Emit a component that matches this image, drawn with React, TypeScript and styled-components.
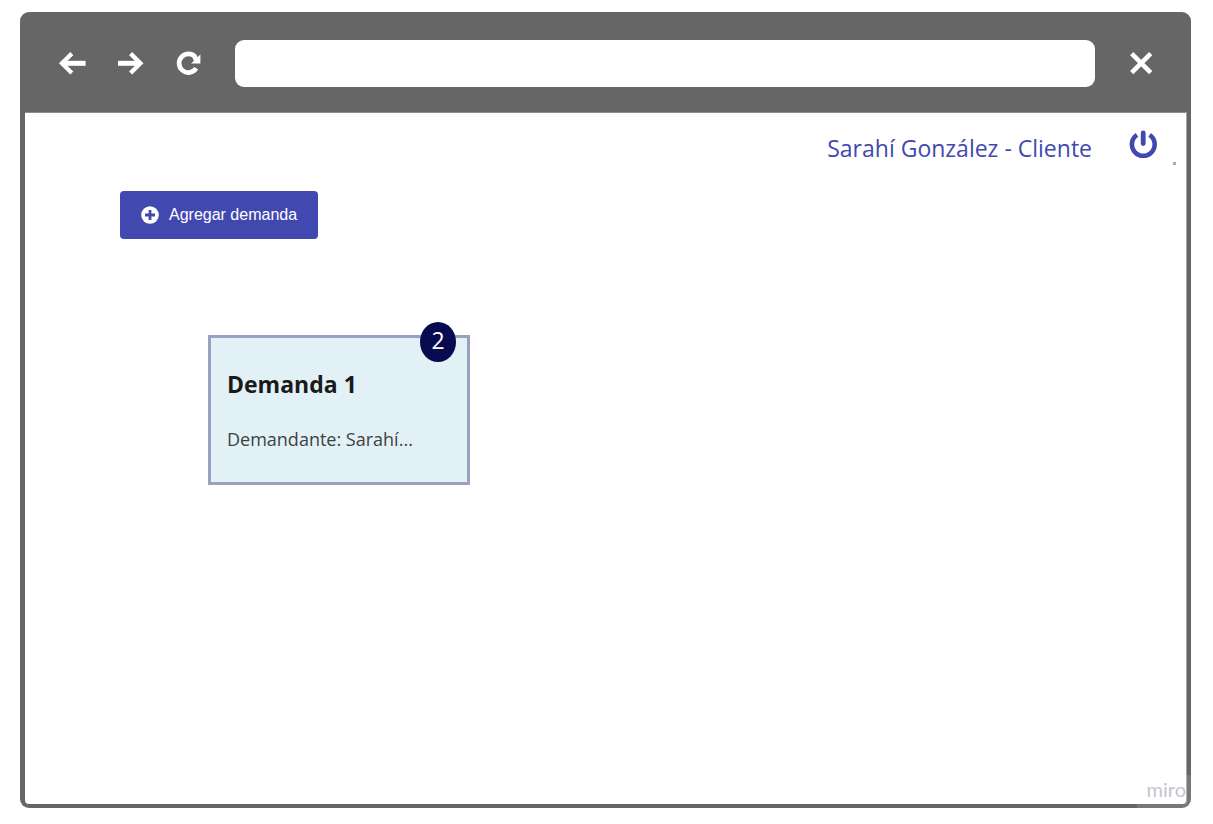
import React from "react";
import styled, { createGlobalStyle } from "styled-components";

const GlobalStyle = createGlobalStyle`
  *, *::before, *::after { box-sizing: border-box; }
  body {
    margin: 0;
    background: #fff;
    font-family: "Open Sans", "Noto Sans", sans-serif;
  }
  button { font: inherit; border: 0; padding: 0; cursor: pointer; }
  h2, p { margin: 0; }
  svg { display: block; }
`;

const Page = styled.div`
  min-height: 100vh;
  padding: 12px 22px 16px 20px;
  display: flex;
`;

const BrowserWindow = styled.div`
  position: relative;
  flex: 1;
  display: flex;
  flex-direction: column;
  background: #666;
  border-radius: 9px;
  padding: 0 4px 4px 5px;
`;

const Toolbar = styled.header`
  height: 100px;
  display: flex;
  align-items: center;
  gap: 31px;
  padding: 2px 32px 0 33px;
`;

const ToolButton = styled.button`
  display: flex;
  width: 28px;
  height: 24px;
  background: none;
  color: #fff;
`;

const AddressField = styled.input`
  flex: 1;
  min-width: 0;
  height: 47px;
  margin-right: 1px;
  border: 0;
  border-radius: 9px;
  background: #fff;
  padding: 0 16px;
  font: inherit;
  font-size: 18px;
`;

const Viewport = styled.main`
  flex: 1;
  background: #fff;
  border-top: 1px solid #8e8e8e;
  border-right: 1px solid #a8a8a8;
  border-radius: 0 0 4px 4px;
`;

const AccountBar = styled.div`
  display: flex;
  justify-content: flex-end;
  padding: 16px 10px 0 0;
  color: #4149b0;
`;

const AccountName = styled.span`
  font-size: 23px;
  line-height: 38px;
  margin-right: 36px;
`;

const PowerButton = styled.button`
  display: flex;
  width: 30px;
  height: 30px;
  background: none;
  color: #4149b0;
`;

const Dot = styled.span`
  width: 3px;
  height: 3px;
  margin: 33px 0 0 15px;
  background: #a3a6c4;
`;

const Content = styled.div`
  padding: 24px 95px;
`;

const AddButton = styled.button`
  display: flex;
  align-items: center;
  gap: 10px;
  height: 48px;
  padding: 0 21px;
  border-radius: 4px;
  background: #4149b0;
  color: #fff;
  font-family: "Liberation Sans", Arial, sans-serif;
  font-size: 16px;
  line-height: 24px;
`;

const Card = styled.article`
  position: relative;
  width: 262px;
  height: 150px;
  margin: 96px 0 0 88px;
  padding: 30px 16px;
  border: 3px solid #9aa1c0;
  background: #e2f1f5;
  color: #1a1a1a;
`;

const CardTitle = styled.h2`
  font-size: 23px;
  line-height: 32px;
  font-weight: 700;
`;

const CardText = styled.p`
  margin-top: 27px;
  color: #3c4144;
  font-size: 18px;
  line-height: 24px;
`;

const Badge = styled.span`
  position: absolute;
  top: -16px;
  right: 11px;
  width: 36px;
  height: 40px;
  border-radius: 50%;
  background: #080b50;
  color: #fff;
  font-size: 23px;
  line-height: 37px;
  text-align: center;
`;

const Watermark = styled.span`
  position: absolute;
  right: 0;
  bottom: 0;
  width: 54px;
  height: 33px;
  padding-right: 5px;
  border-bottom-right-radius: 9px;
  background: rgba(255, 255, 255, 0.12);
  color: #c4c4ce;
  font-family: Lato, sans-serif;
  font-size: 20px;
  line-height: 28px;
  text-align: right;
`;

const BackIcon = () => (
  <svg width="28" height="24" viewBox="0 0 28 24" fill="none" stroke="currentColor" aria-hidden="true">
    <path d="M13.8 2.6 4 12.3l9.8 9.7" strokeWidth="4.3" />
    <path d="M5.5 12.3H27.6" strokeWidth="5" />
  </svg>
);

const ForwardIcon = () => (
  <svg width="28" height="24" viewBox="0 0 28 24" fill="none" stroke="currentColor" aria-hidden="true">
    <path d="M13.6 2.6 23.4 12.3l-9.8 9.7" strokeWidth="4.3" />
    <path d="M1 12.3h21" strokeWidth="5" />
  </svg>
);

const ReloadIcon = () => (
  <svg width="28" height="24" viewBox="0 0 28 24" fill="none" aria-hidden="true">
    <path d="M19.4 6.1A9.3 9.3 0 1 0 20.2 17.3" stroke="currentColor" strokeWidth="4.7" />
    <path d="M24.4 3.4v9.2h-9.3l3.1-3.1-1.6-1.6 3.4-3.4 1.6 1.6z" fill="currentColor" />
  </svg>
);

const CloseIcon = () => (
  <svg width="28" height="24" viewBox="0 0 28 24" fill="none" stroke="currentColor" strokeWidth="4.6" aria-hidden="true">
    <path d="M4.7 2.7l19 19M23.7 2.7l-19 19" />
  </svg>
);

const PowerIcon = () => (
  <svg width="30" height="30" viewBox="0 0 30 30" fill="none" stroke="currentColor" aria-hidden="true">
    <path d="M9 5.9A11.4 11.4 0 1 0 21.6 5.9" strokeWidth="4.6" />
    <path d="M15.2 4v10.6" strokeWidth="4.8" strokeLinecap="round" />
  </svg>
);

const AddIcon = () => (
  <svg width="18" height="18" viewBox="0 0 18 18" fill="none" aria-hidden="true">
    <circle cx="9" cy="9" r="8.8" fill="#fff" />
    <path d="M9 4v10M4 9h10" stroke="#4149b0" strokeWidth="2.8" />
  </svg>
);

export default function App() {
  return (
    <Page>
      <GlobalStyle />
      <BrowserWindow>
        <Toolbar>
          <ToolButton type="button" aria-label="Atrás"><BackIcon /></ToolButton>
          <ToolButton type="button" aria-label="Adelante"><ForwardIcon /></ToolButton>
          <ToolButton type="button" aria-label="Recargar"><ReloadIcon /></ToolButton>
          <AddressField type="text" aria-label="Dirección" />
          <ToolButton type="button" aria-label="Cerrar"><CloseIcon /></ToolButton>
        </Toolbar>
        <Viewport>
          <AccountBar>
            <AccountName>Sarahí González - Cliente</AccountName>
            <PowerButton type="button" aria-label="Cerrar sesión"><PowerIcon /></PowerButton>
            <Dot />
          </AccountBar>
          <Content>
            <AddButton type="button"><AddIcon />Agregar demanda</AddButton>
            <Card>
              <CardTitle>Demanda 1</CardTitle>
              <CardText>Demandante: Sarahí...</CardText>
              <Badge>2</Badge>
            </Card>
          </Content>
        </Viewport>
        <Watermark>miro</Watermark>
      </BrowserWindow>
    </Page>
  );
}
